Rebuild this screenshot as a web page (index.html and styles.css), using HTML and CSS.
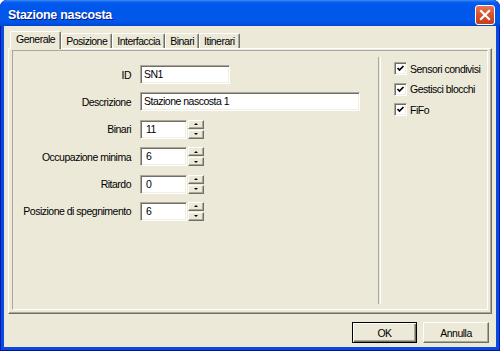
FILE: index.html
```html
<!DOCTYPE html>
<html>

<head>
    <title>Stazione nascosta</title>
    <link rel="stylesheet" href="styles.css">
</head>

<body>
    <div class="window">
        <div class="titlebar">
            <span class="title">Stazione nascosta</span>
            <span class="close">
                <svg width="18" height="18" viewBox="0 0 18 18">
                    <path d="M5 5 L13 13 M13 5 L5 13" stroke="#fff" stroke-width="2.2" stroke-linecap="square" />
                </svg>
            </span>
        </div>
        <div class="client">
            <div class="tabs">
                <div class="tab active">Generale</div>
                <div class="tab">Posizione</div>
                <div class="tab">Interfaccia</div>
                <div class="tab">Binari</div>
                <div class="tab">Itinerari</div>
            </div>
            <div class="page">
                <div class="frame">
                    <div class="fields">
                        <label>ID</label>
                        <div class="edit w-id">SN1</div>

                        <label>Descrizione</label>
                        <div class="edit w-desc">Stazione nascosta 1</div>

                        <label>Binari</label>
                        <div class="spin">
                            <div class="edit w-num">11</div>
                            <div class="spin-btns"><span class="sb up"></span><span class="sb down"></span></div>
                        </div>

                        <label>Occupazione minima</label>
                        <div class="spin">
                            <div class="edit w-num">6</div>
                            <div class="spin-btns"><span class="sb up"></span><span class="sb down"></span></div>
                        </div>

                        <label>Ritardo</label>
                        <div class="spin">
                            <div class="edit w-num">0</div>
                            <div class="spin-btns"><span class="sb up"></span><span class="sb down"></span></div>
                        </div>

                        <label>Posizione di spegnimento</label>
                        <div class="spin">
                            <div class="edit w-num">6</div>
                            <div class="spin-btns"><span class="sb up"></span><span class="sb down"></span></div>
                        </div>
                    </div>
                    <div class="divider"></div>
                    <div class="options">
                        <label class="check">
                            <span class="box"><svg width="9" height="9" viewBox="0 0 9 9"><path d="M1.5 4 L3.5 6 L7.5 2" stroke="#000" stroke-width="1.7" fill="none" /></svg></span>
                            Sensori condivisi
                        </label>
                        <label class="check">
                            <span class="box"><svg width="9" height="9" viewBox="0 0 9 9"><path d="M1.5 4 L3.5 6 L7.5 2" stroke="#000" stroke-width="1.7" fill="none" /></svg></span>
                            Gestisci blocchi
                        </label>
                        <label class="check">
                            <span class="box"><svg width="9" height="9" viewBox="0 0 9 9"><path d="M1.5 4 L3.5 6 L7.5 2" stroke="#000" stroke-width="1.7" fill="none" /></svg></span>
                            FiFo
                        </label>
                    </div>
                </div>
            </div>
            <div class="buttons">
                <div class="btn default">OK</div>
                <div class="btn">Annulla</div>
            </div>
        </div>
    </div>
</body>

</html>
```

FILE: styles.css
```css
body {
    margin: 0;
    background: #fff;
    font-family: "Liberation Sans", Arial, sans-serif;
    font-size: 10.5px;
    letter-spacing: -0.5px;
    color: #000;
    white-space: nowrap;
}

.window {
    width: 500px;
    height: 351px;
    display: flex;
    flex-direction: column;
    background: #0a48e4;
    border-radius: 7px 7px 0 0;
    box-shadow: inset 1px 0 #001ca8, inset -1px 0 #001ca8, inset 0 -1px #00138c;
    overflow: hidden;
}

.titlebar {
    height: 26px;
    flex: none;
    display: flex;
    justify-content: space-between;
    padding: 0 5px 0 8px;
    background: linear-gradient(#3f8cf3 0, #0c60ef 2px, #0058ee 4px, #0056e8 40%, #0058ec 70%, #0054e3 88%, #0044cf 100%);
    border-radius: 7px 7px 0 0;
}

.title {
    color: #fff;
    font: bold 12.5px "Liberation Sans", Arial, sans-serif;
    letter-spacing: -0.3px;
    text-shadow: 1px 1px #0a1883;
    padding-top: 8px;
}

.close {
    width: 20px;
    height: 20px;
    margin-top: 5px;
    box-sizing: border-box;
    border: 1px solid #fff;
    border-radius: 3px;
    background: linear-gradient(#e87654, #d9502c 50%, #c43f1d);
    display: flex;
    align-items: center;
    justify-content: center;
}

.client {
    flex: 1;
    margin: 0 4px 4px;
    padding: 5px 4px 0;
    background: #ece9d8;
    display: flex;
    flex-direction: column;
}

/* tabs */
.tabs {
    height: 17px;
    display: flex;
    align-items: flex-end;
    padding-left: 2px;
}

.tab {
    height: 15px;
    box-sizing: border-box;
    padding: 0 4px;
    line-height: 14px;
    border: 1px solid;
    border-bottom: none;
    border-color: #fff #716f64 #716f64 #fff;
    box-shadow: inset -1px 0 #aca899;
    border-radius: 2px 2px 0 0;
}

.tab.active {
    height: 18px;
    margin-bottom: -1px;
    padding: 0 5px;
    line-height: 15px;
    position: relative;
    z-index: 1;
    background: #ece9d8;
}

/* page */
.page {
    height: 266px;
    flex: none;
    box-sizing: border-box;
    border: 1px solid;
    border-color: #fff #716f64 #716f64 #fff;
    box-shadow: inset -1px -1px #aca899;
    padding: 1px 3px 3px 3px;
    display: flex;
}

.frame {
    flex: 1;
    border: 1px solid;
    border-color: #aca899 #fff #fff #aca899;
    display: flex;
}

.fields {
    width: 365px;
    flex: none;
    box-sizing: border-box;
    padding-top: 14px;
    display: grid;
    grid-template-columns: 118px auto;
    column-gap: 9px;
    row-gap: 8.4px;
    align-content: start;
    align-items: center;
    justify-items: start;
}

.fields label {
    justify-self: end;
}

.edit {
    height: 19px;
    box-sizing: border-box;
    background: #fff;
    border: 1px solid;
    border-color: #aca899 #fff #fff #aca899;
    box-shadow: inset 1px 1px #716f64, inset -1px -1px #f1efe2;
    padding: 0 3px;
    line-height: 17px;
}

.w-id {
    width: 90px;
}

.w-desc {
    width: 220px;
}

.w-num {
    width: 47px;
    padding-left: 5px;
}

.spin {
    display: flex;
    gap: 1px;
}

.spin-btns {
    width: 16px;
    display: flex;
    flex-direction: column;
    gap: 1px;
}

.sb {
    height: 9px;
    box-sizing: border-box;
    border: 1px solid;
    border-color: #fff #716f64 #716f64 #fff;
    box-shadow: inset -1px -1px #aca899;
    background: #ece9d8;
    display: flex;
    align-items: center;
    justify-content: center;
}

.sb::after {
    content: "";
    border-left: 2px solid transparent;
    border-right: 2px solid transparent;
}

.sb.up::after {
    border-bottom: 2px solid #000;
}

.sb.down::after {
    border-top: 2px solid #000;
}

.divider {
    width: 1px;
    margin: 6px 0 5px;
    border-left: 1px solid #aca899;
    border-right: 1px solid #fff;
}

.options {
    flex: 1;
    padding: 11px 0 0 13px;
    display: flex;
    flex-direction: column;
    gap: 7.5px;
}

.check {
    display: flex;
    align-items: center;
    gap: 3px;
    height: 13px;
}

.box {
    width: 13px;
    height: 13px;
    box-sizing: border-box;
    background: #fff;
    border: 1px solid;
    border-color: #aca899 #fff #fff #aca899;
    box-shadow: inset 1px 1px #716f64, inset -1px -1px #f1efe2;
    display: flex;
    align-items: center;
    justify-content: center;
}

/* bottom buttons */
.buttons {
    display: flex;
    justify-content: flex-end;
    gap: 6px;
    padding: 8px 3px 0 0;
}

.btn {
    width: 66px;
    height: 21px;
    box-sizing: border-box;
    border: 1px solid;
    border-color: #fff #716f64 #716f64 #fff;
    box-shadow: inset -1px -1px #aca899;
    display: flex;
    align-items: center;
    justify-content: center;
}

.btn.default {
    width: 65px;
    border-color: #000;
    box-shadow: inset 1px 1px #fff, inset -1px -1px #716f64, inset -2px -2px #aca899;
}
```
